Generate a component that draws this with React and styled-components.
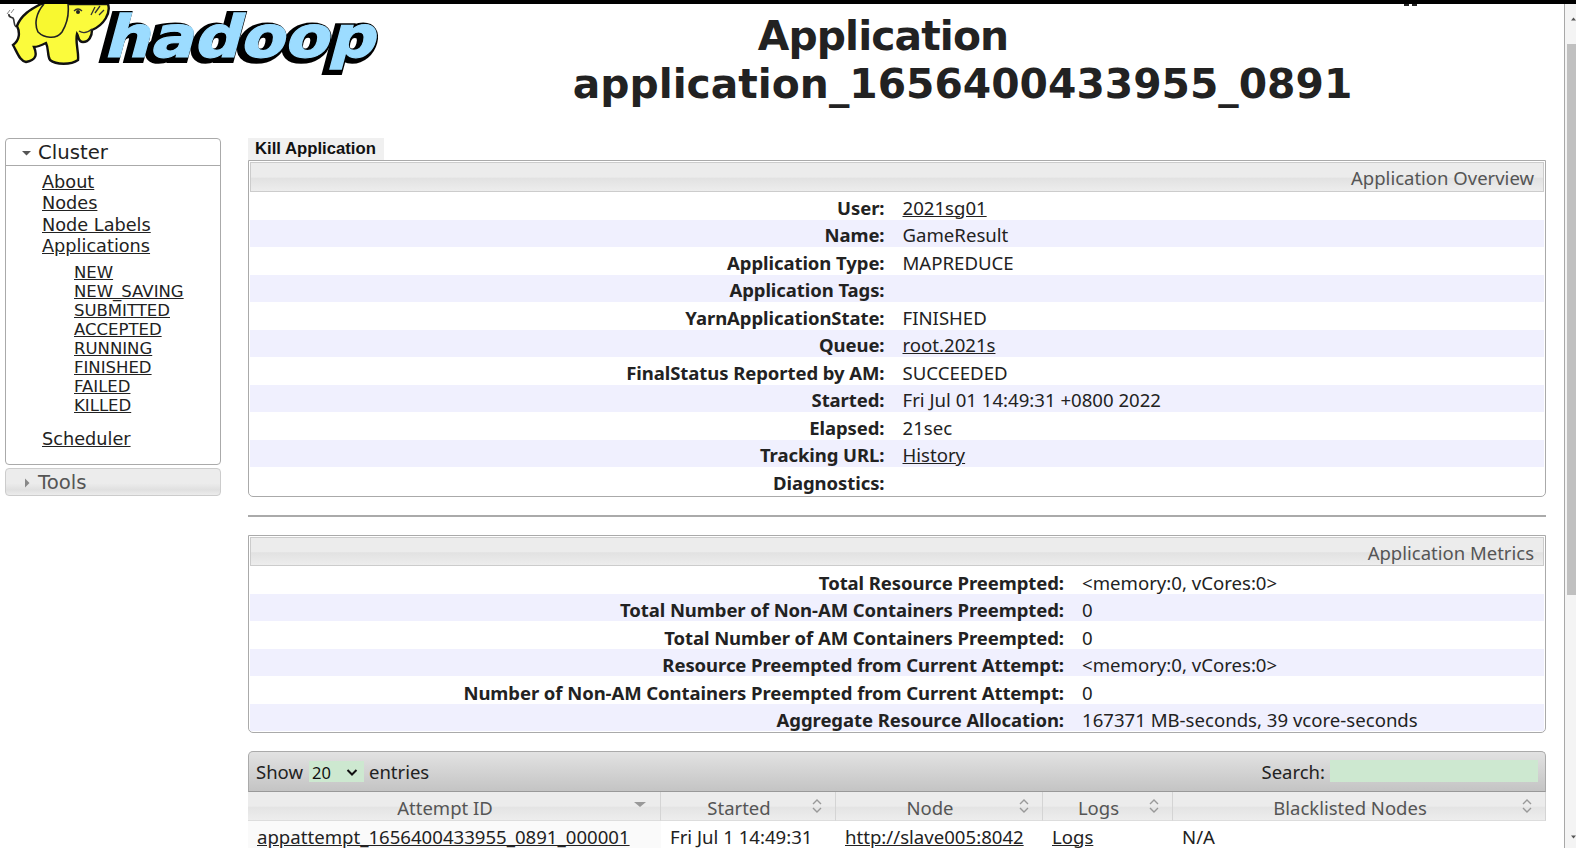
import React from 'react';
import styled, { createGlobalStyle } from 'styled-components';

const GlobalStyle = createGlobalStyle`
  html, body {
    margin: 0;
    padding: 0;
    background: #fff;
    overflow: hidden;
  }
  * {
    box-sizing: border-box;
  }
  a {
    color: #222;
  }
`;

const Page = styled.div`
  position: relative;
  width: 1576px;
  height: 860px;
  overflow: hidden;
  background: #fff;
  color: #222;
  font-family: "Noto Sans", "Open Sans", sans-serif;
`;

const TopBar = styled.div`
  height: 4px;
  background: #000;
`;

/* the tip of something cut off by the black bar */
const BarNotch = styled.div`
  position: absolute;
  left: 1404px;
  top: 4px;
  width: 14px;
  height: 2px;
  background: repeating-linear-gradient(90deg, #222 0 5px, #fff 5px 8px);
`;

const Viewport = styled.div`
  display: flex;
  height: 844px;
`;

const Content = styled.div`
  flex: 1;
  min-width: 0;
  overflow: hidden;
`;

const Scrollbar = styled.div`
  width: 12px;
  border-left: 1px solid #a8a8a8;
  padding: 0 0 0 2px;
  display: flex;
  flex-direction: column;
  background: #f4f4f4;
  overflow: hidden;
`;

const ScrollArrow = styled.div`
  height: 40px;
  padding-top: 11px;
  padding-left: 4px;
  flex: ${(p) => (p.$down ? 1 : 'none')};
  display: flex;
  align-items: ${(p) => (p.$down ? 'flex-end' : 'flex-start')};
  padding-bottom: ${(p) => (p.$down ? '7px' : '0')};
`;

const ScrollThumb = styled.div`
  height: 551px;
  background: #c0c0c0;
`;

const Header = styled.header`
  display: flex;
  height: 134px;
`;

const LogoBox = styled.div`
  width: 384px;
  flex: none;
`;

const Title = styled.h1`
  flex: 1;
  margin: 0;
  padding: 8px 23px 0 0;
  font-family: "DejaVu Sans", Verdana, sans-serif;
  font-weight: 700;
  font-size: 40.8px;
  line-height: 48px;
  text-align: center;
`;

const TitleLine = styled.div`
  padding-right: ${(p) => p.$shift || 0}px;
  letter-spacing: ${(p) => p.$tight || 0}px;
`;

const Body = styled.div`
  display: flex;
  align-items: flex-start;
  padding-left: 5px;
`;

const Nav = styled.nav`
  width: 216px;
  flex: none;
  font-family: "DejaVu Sans", Verdana, sans-serif;
`;

const NavBox = styled.div`
  border: 1px solid #aaa;
  border-radius: 4px;
  height: 327px;
`;

const NavHead = styled.div`
  display: flex;
  align-items: center;
  height: 27px;
  border-bottom: 1px solid #aaa;
  padding: 1px 0 0 16px;
  font-size: 19.7px;
  gap: 6px;
  color: #222;
`;

const ToolsHead = styled(NavHead)`
  margin-top: 3px;
  height: 28px;
  border: 1px solid #ccc;
  border-radius: 4px;
  background: linear-gradient(#ececec 55%, #e0e0e0 80%, #ececec);
  color: #555;
`;

const NavList = styled.ul`
  list-style: none;
  margin: 0;
  padding: 6px 0 0 36px;
  font-size: 17.7px;
  line-height: 21.3px;
`;

const SubList = styled.ul`
  list-style: none;
  margin: 0;
  padding: 6px 0 14px 32px;
  font-size: 16.5px;
  line-height: 19px;
`;

const MainCol = styled.main`
  width: 1298px;
  margin-left: 27px;
`;

const KillTab = styled.div`
  width: 136px;
  height: 22px;
  background: #f0f0f0;
  font-family: "Liberation Sans", Arial, sans-serif;
  font-weight: 700;
  font-size: 16.7px;
  line-height: 21px;
  padding-left: 7px;
  color: #111;
`;

const Panel = styled.section`
  border: 1px solid #aaa;
  border-radius: 0 0 5px 5px;
  padding: 1px;
  overflow: hidden;
`;

const PanelHead = styled.div`
  height: ${(p) => p.$height}px;
  border: 1px solid #ccc;
  background: linear-gradient(#ececec 50%, #e2e2e2 55%, #ededed);
  text-align: right;
  font-size: 18.5px;
  line-height: 30px;
  padding-right: 9px;
  color: #555;
`;

const Row = styled.div`
  display: grid;
  grid-template-columns: ${(p) => p.$labelWidth}px 1fr;
  column-gap: 18px;
  height: 27.55px;
  padding-top: ${(p) => p.$nudge}px;
  align-items: center;
  background: ${(p) => (p.$odd ? '#f0f0fe' : '#fff')};
  font-size: 18.6px;
`;

const Label = styled.div`
  text-align: right;
  font-weight: 700;
  font-size: 18.5px;
  letter-spacing: -0.07px;
  white-space: nowrap;
`;

const Value = styled.div`
  white-space: nowrap;
`;

const Rule = styled.hr`
  height: 2px;
  margin: 18px 0 18px;
  border: 0;
  background: #aaa;
`;

const DataTable = styled.section`
  margin-top: 18px;
`;

const Toolbar = styled.div`
  display: flex;
  align-items: center;
  height: 40.5px;
  border: 1px solid #aaa;
  border-bottom-color: #999;
  border-radius: 5px 5px 0 0;
  background: linear-gradient(#e2e2e2, #c4c4c4);
  padding: 0 7px 1px 7px;
  font-size: 18.5px;
`;

const SelectWrap = styled.span`
  position: relative;
  display: inline-flex;
  margin: 0 5px 0 6px;
`;

const PageSize = styled.select`
  appearance: none;
  width: 55px;
  height: 21px;
  padding-left: 3px;
  border: 0;
  border-radius: 0;
  background: #cde8d0;
  color: #111;
  font-family: inherit;
  font-size: 16.5px;
`;

const SelectChevron = styled.svg`
  position: absolute;
  right: 6px;
  top: 8px;
  pointer-events: none;
`;

const SearchLabel = styled.label`
  margin-left: auto;
  display: flex;
  align-items: center;
  gap: 5px;
`;

const SearchInput = styled.input`
  width: 208px;
  height: 22px;
  border: 0;
  background: #cde8d0;
`;

const ColGrid = styled.div`
  display: grid;
  grid-template-columns: 413px 175px 207px 130px 373px;
`;

const HeadCell = styled.div`
  position: relative;
  height: 29px;
  text-align: center;
  font-size: 18.5px;
  line-height: 32px;
  color: #555;
  border-right: 1px solid #d4d4d4;
  border-bottom: 1px solid #ddd;
  padding-right: 18px;
  background: linear-gradient(#ececec 50%, #e4e4e4 55%, #ededed);
`;

const SortMark = styled.svg`
  position: absolute;
  right: ${(p) => p.$right || 12}px;
  top: 6px;
`;

const Cell = styled.div`
  height: 27px;
  padding-left: 9px;
  font-size: 18.6px;
  line-height: 32px;
  white-space: nowrap;
  background: ${(p) => (p.$sorted ? '#fafafa' : '#fff')};
`;

const Caret = ({ open, color }) => (
  <svg width="10" height="10" viewBox="0 0 10 10">
    {open ? <path d="M0 3h9L4.5 7.5z" fill={color} /> : <path d="M3 0.5v9L7.5 5z" fill={color} />}
  </svg>
);

const SortBoth = () => (
  <SortMark width="12" height="16" viewBox="0 0 12 16">
    <path d="M2 6L6 2l4 4M2 10l4 4 4-4" fill="none" stroke="#999" strokeWidth="1.4" />
  </SortMark>
);

const SortDown = () => (
  <SortMark $right={13} width="14" height="16" viewBox="0 0 14 16">
    <path d="M1 4h12L7 9z" fill="#999" />
  </SortMark>
);

const LogoWord = styled.text`
  font-family: "DejaVu Sans", sans-serif;
  font-weight: 700;
  font-size: 58px;
`;

const LogoSvg = styled.svg`
  display: block;
  overflow: visible;
`;

const Logo = () => (
  <LogoSvg width="384" height="80" viewBox="0 0 384 80">
    {/* wordmark, real text with an outline */}
    <g transform="translate(98 53) skewX(-15)">
      <LogoWord
        x="1"
        y="2"
        textLength="273"
        lengthAdjust="spacingAndGlyphs"
        fill="#000"
        stroke="#000"
        strokeWidth="8"
      >
        hadoop
      </LogoWord>
      <LogoWord
        x="5"
        y="0"
        textLength="271"
        lengthAdjust="spacingAndGlyphs"
        fill="#9cdcff"
        stroke="#9cdcff"
        strokeWidth="1.2"
      >
        hadoop
      </LogoWord>
    </g>
    {/* elephant */}
    <path d="M9 10c-1 3 2 3 4 4 2 3 0 6 3 9" fill="none" stroke="#333" strokeWidth="1.6" />
    <path d="M10 6l-3 4M14 5l-3 4" stroke="#888" strokeWidth="1" />
    <path
      d="M17 22C21 11 31 5 41 0 L108 0C111 9 104 21 92 26C92 32 89 38 83 38C78 38 79 33 77 30C75 38 79 48 78 56C71 61 56 61 50 56C47 51 49 45 46 39C42 41 38 43 34 43C37 50 37 56 26 58C20 57 18 50 13 41C20 36 20 28 17 22Z"
      fill="#fbfb3c"
      stroke="#111"
      strokeWidth="2.4"
    />
    <path d="M44 0C36 9 34 20 38 28C44 34 56 36 62 28C67 20 69 9 68 0" fill="#f8f830" stroke="#222" strokeWidth="1.6" />
    <path d="M74 7q4-4 8 0M95 3l-4 8M100 2l-5 7M104 6l-5 5" fill="none" stroke="#333" strokeWidth="1.3" />
    <circle cx="78" cy="8" r="2" fill="#222" />
    <path d="M79 27q6 4 13-2" fill="none" stroke="#333" strokeWidth="1.4" />
  </LogoSvg>
);

const overviewRows = [
  ['User:', <a href="#u">2021sg01</a>],
  ['Name:', 'GameResult'],
  ['Application Type:', 'MAPREDUCE'],
  ['Application Tags:', ''],
  ['YarnApplicationState:', 'FINISHED'],
  ['Queue:', <a href="#q">root.2021s</a>],
  ['FinalStatus Reported by AM:', 'SUCCEEDED'],
  ['Started:', 'Fri Jul 01 14:49:31 +0800 2022'],
  ['Elapsed:', '21sec'],
  ['Tracking URL:', <a href="#h">History</a>],
  ['Diagnostics:', ''],
];

const metricRows = [
  ['Total Resource Preempted:', '<memory:0, vCores:0>'],
  ['Total Number of Non-AM Containers Preempted:', '0'],
  ['Total Number of AM Containers Preempted:', '0'],
  ['Resource Preempted from Current Attempt:', '<memory:0, vCores:0>'],
  ['Number of Non-AM Containers Preempted from Current Attempt:', '0'],
  ['Aggregate Resource Allocation:', '167371 MB-seconds, 39 vcore-seconds'],
];

const subLinks = ['NEW', 'NEW_SAVING', 'SUBMITTED', 'ACCEPTED', 'RUNNING', 'FINISHED', 'FAILED', 'KILLED'];

export default function App() {
  return (
    <Page>
      <GlobalStyle />
      <TopBar />
      <BarNotch />
      <Viewport>
        <Content>
          <Header>
            <LogoBox>
              <Logo />
            </LogoBox>
            <Title>
              <TitleLine $shift={159} $tight={-0.9}>Application</TitleLine>
              <TitleLine>application_1656400433955_0891</TitleLine>
            </Title>
          </Header>
          <Body>
            <Nav>
              <NavBox>
                <NavHead>
                  <Caret open color="#555" />
                  Cluster
                </NavHead>
                <NavList>
                  <li><a href="#about">About</a></li>
                  <li><a href="#nodes">Nodes</a></li>
                  <li><a href="#labels">Node Labels</a></li>
                  <li>
                    <a href="#apps">Applications</a>
                    <SubList>
                      {subLinks.map((s) => (
                        <li key={s}><a href={'#' + s}>{s}</a></li>
                      ))}
                    </SubList>
                  </li>
                  <li><a href="#scheduler">Scheduler</a></li>
                </NavList>
              </NavBox>
              <ToolsHead>
                <Caret color="#888" />
                Tools
              </ToolsHead>
            </Nav>
            <MainCol>
              <KillTab>Kill Application</KillTab>
              <Panel>
                <PanelHead $height={30}>Application Overview</PanelHead>
                {overviewRows.map(([k, v], i) => (
                  <Row key={k} $labelWidth={634.5} $nudge={2.5} $odd={i % 2 === 1}>
                    <Label>{k}</Label>
                    <Value>{v}</Value>
                  </Row>
                ))}
              </Panel>
              <Rule />
              <Panel>
                <PanelHead $height={29}>Application Metrics</PanelHead>
                {metricRows.map(([k, v], i) => (
                  <Row key={k} $labelWidth={814} $nudge={3.5} $odd={i % 2 === 1}>
                    <Label>{k}</Label>
                    <Value>{v}</Value>
                  </Row>
                ))}
              </Panel>
              <DataTable>
                <Toolbar>
                  Show
                  <SelectWrap>
                    <PageSize defaultValue="20">
                      <option value="20">20</option>
                      <option value="50">50</option>
                    </PageSize>
                    <SelectChevron width="12" height="7" viewBox="0 0 12 7">
                      <path d="M1.5 1L6 5.5 10.5 1" fill="none" stroke="#111" strokeWidth="2" />
                    </SelectChevron>
                  </SelectWrap>
                  entries
                  <SearchLabel>
                    Search:
                    <SearchInput type="text" />
                  </SearchLabel>
                </Toolbar>
                <ColGrid>
                  <HeadCell>Attempt ID<SortDown /></HeadCell>
                  <HeadCell>Started<SortBoth /></HeadCell>
                  <HeadCell>Node<SortBoth /></HeadCell>
                  <HeadCell>Logs<SortBoth /></HeadCell>
                  <HeadCell>Blacklisted Nodes<SortBoth /></HeadCell>
                  <Cell $sorted><a href="#a">appattempt_1656400433955_0891_000001</a></Cell>
                  <Cell>Fri Jul 1 14:49:31</Cell>
                  <Cell><a href="#n">http://slave005:8042</a></Cell>
                  <Cell><a href="#l">Logs</a></Cell>
                  <Cell>N/A</Cell>
                </ColGrid>
              </DataTable>
            </MainCol>
          </Body>
        </Content>
        <Scrollbar>
          <ScrollArrow>
            <svg width="10" height="8" viewBox="0 0 10 8"><path d="M0 7L5 1l5 6z" fill="#555" /></svg>
          </ScrollArrow>
          <ScrollThumb />
          <ScrollArrow $down>
            <svg width="10" height="8" viewBox="0 0 10 8"><path d="M0 1l5 6 5-6z" fill="#555" /></svg>
          </ScrollArrow>
        </Scrollbar>
      </Viewport>
    </Page>
  );
}
